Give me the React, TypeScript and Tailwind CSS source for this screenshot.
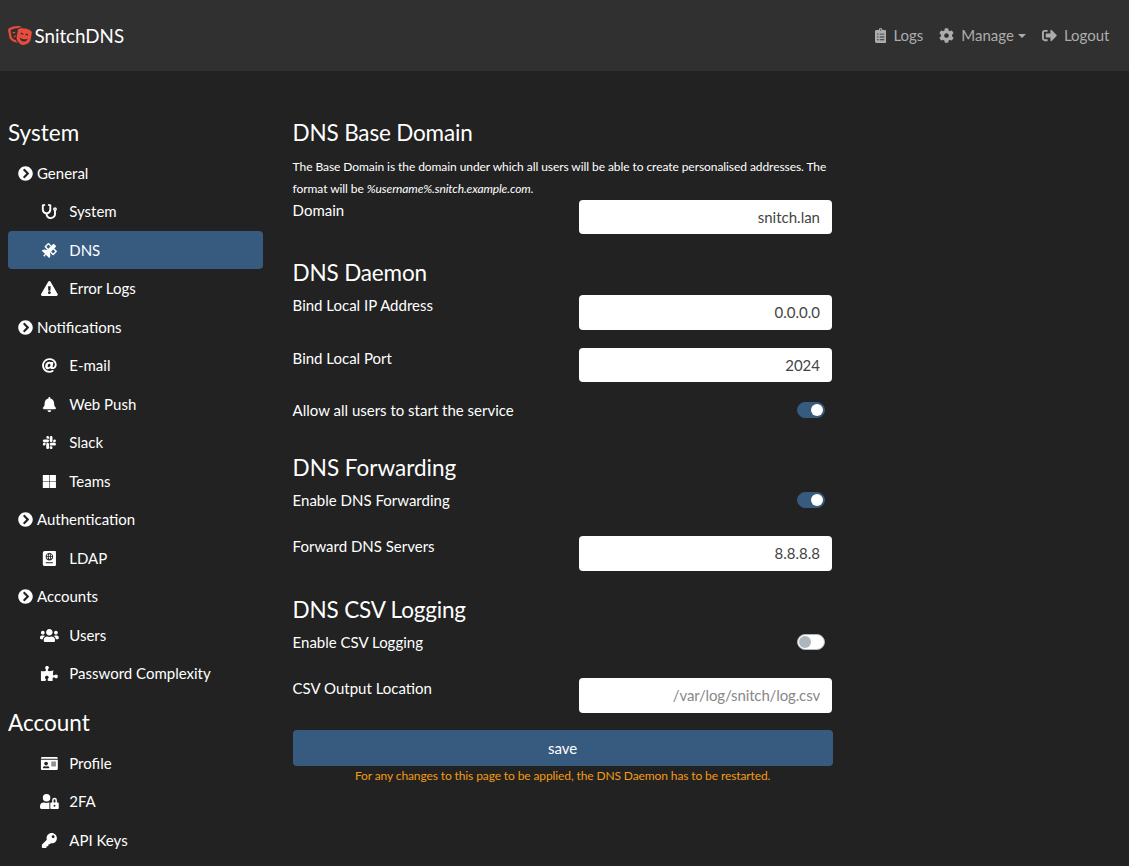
import React from "react";
import {
  FaTheaterMasks, FaClipboardList, FaCog, FaSignOutAlt, FaChevronCircleRight, FaStethoscope,
  FaSatellite, FaExclamationTriangle, FaAt, FaBell, FaSlack, FaMicrosoft, FaPassport, FaUsers,
  FaPuzzlePiece, FaIdCard, FaUserLock, FaKey,
} from "react-icons/fa";
import type { IconType } from "react-icons";

const systemGroups: { title: string; items: [string, IconType][] }[] = [
  { title: "General", items: [["System", FaStethoscope], ["DNS", FaSatellite], ["Error Logs", FaExclamationTriangle]] },
  { title: "Notifications", items: [["E-mail", FaAt], ["Web Push", FaBell], ["Slack", FaSlack], ["Teams", FaMicrosoft]] },
  { title: "Authentication", items: [["LDAP", FaPassport]] },
  { title: "Accounts", items: [["Users", FaUsers], ["Password Complexity", FaPuzzlePiece]] },
];

const accountItems: [string, IconType][] = [["Profile", FaIdCard], ["2FA", FaUserLock], ["API Keys", FaKey]];

function Heading({ children, tight }: { children: React.ReactNode; tight?: boolean }) {
  return (
    <h4 className={`mb-2 text-[22.5px] leading-[27px] font-normal ${tight ? "tracking-[-0.17px]" : ""}`}>
      {children}
    </h4>
  );
}

function Item({ label, icon: Icon, active }: { label: string; icon: IconType; active?: boolean }) {
  return (
    <a className={`flex h-[38.5px] items-center rounded-[4px] pl-8 ${active ? "bg-[#375a7f]" : ""}`}>
      <Icon className="mt-[0.7px] h-[15px] w-[18.75px] shrink-0" />
      <span className="ml-[10.5px]">{label}</span>
    </a>
  );
}

function Field({ label, value, placeholder }: { label: string; value?: string; placeholder?: string }) {
  return (
    <div className="flex h-[52.5px] items-start justify-between pr-[0.6px]">
      <label>{label}</label>
      <input
        className="mt-[0.85px] h-[34.5px] w-[253px] rounded-[4px] bg-white px-3 text-right text-[#444] placeholder:tracking-[-0.13px] placeholder:text-[#888]"
        defaultValue={value}
        placeholder={placeholder}
      />
    </div>
  );
}

function Toggle({ label, on }: { label: string; on?: boolean }) {
  return (
    <div className="flex h-[46.5px] items-start justify-between pr-[7.6px]">
      <label>{label}</label>
      <span
        className={`mt-[2.9px] flex h-4 w-7 items-center rounded-full border px-px ${
          on ? "justify-end border-[#375a7f] bg-[#375a7f]" : "justify-start border-[#adb5bd] bg-white"
        }`}
      >
        <span className={`size-3 rounded-full ${on ? "bg-white" : "bg-[#adb5bd]"}`} />
      </span>
    </div>
  );
}

export default function App() {
  return (
    <div className="h-[866px] overflow-hidden bg-[#222] font-[Lato,sans-serif] text-[15px] leading-[22.5px] text-white">
      <nav className="flex h-[71px] items-center justify-between bg-[#303030] pr-[19.5px] pl-2">
        <a className="flex items-center gap-[2.5px] text-[18.75px] leading-[28px]">
          <FaTheaterMasks className="h-[19px] w-6 text-[#e74c3c]" />
          SnitchDNS
        </a>
        <div className="flex items-center text-[#acacac]">
          <FaClipboardList className="h-[15px] w-[11.25px]" />
          <span className="ml-[7px]">Logs</span>
          <FaCog className="ml-4 size-[15px]" />
          <span className="ml-[7px]">Manage</span>
          <span className="ml-1 border-x-4 border-t-4 border-x-transparent border-t-current" />
          <FaSignOutAlt className="ml-4 size-[15px]" />
          <span className="ml-[7px]">Logout</span>
        </div>
      </nav>
      <div className="flex pt-[47.7px] pl-2">
        <aside className="w-[255px] shrink-0">
          <Heading>System</Heading>
          {systemGroups.map((g) => (
            <div key={g.title}>
              <div className="flex h-[38.5px] items-center pl-[10px]">
                <FaChevronCircleRight className="mt-[0.7px] mr-1 size-[15px]" />
                {g.title}
              </div>
              {g.items.map(([label, icon]) => (
                <Item key={label} label={label} icon={icon} active={label === "DNS"} />
              ))}
            </div>
          ))}
          <div className="mt-4">
            <Heading>Account</Heading>
            {accountItems.map(([label, icon]) => (
              <Item key={label} label={label} icon={icon} />
            ))}
          </div>
        </aside>
        <main className="ml-[29.6px] w-[540px] shrink-0">
          <section className="mb-2">
            <Heading tight>DNS Base Domain</Heading>
            <p className="h-[45px] pt-[2.6px] text-[12px] leading-[22px] tracking-[-0.07px]">
              The Base Domain is the domain under which all users will be able to create personalised addresses. The
              format will be <em className="tracking-[-0.12px]">%username%.snitch.example.com</em>.
            </p>
            <Field label="Domain" value="snitch.lan" />
          </section>
          <section className="mb-2">
            <Heading tight>DNS Daemon</Heading>
            <Field label="Bind Local IP Address" value="0.0.0.0" />
            <Field label="Bind Local Port" value="2024" />
            <Toggle label="Allow all users to start the service" on />
          </section>
          <section className="mb-2">
            <Heading>DNS Forwarding</Heading>
            <Toggle label="Enable DNS Forwarding" on />
            <Field label="Forward DNS Servers" value="8.8.8.8" />
          </section>
          <section>
            <Heading tight>DNS CSV Logging</Heading>
            <Toggle label="Enable CSV Logging" />
            <Field label="CSV Output Location" placeholder="/var/log/snitch/log.csv" />
          </section>
          <button className="mt-[0.3px] block h-9 w-full rounded-[4px] bg-[#375a7f]">save</button>
          <p className="text-center text-[12px] leading-[20px] tracking-[-0.11px] text-[#f39c12]">
            For any changes to this page to be applied, the DNS Daemon has to be restarted.
          </p>
        </main>
      </div>
    </div>
  );
}
